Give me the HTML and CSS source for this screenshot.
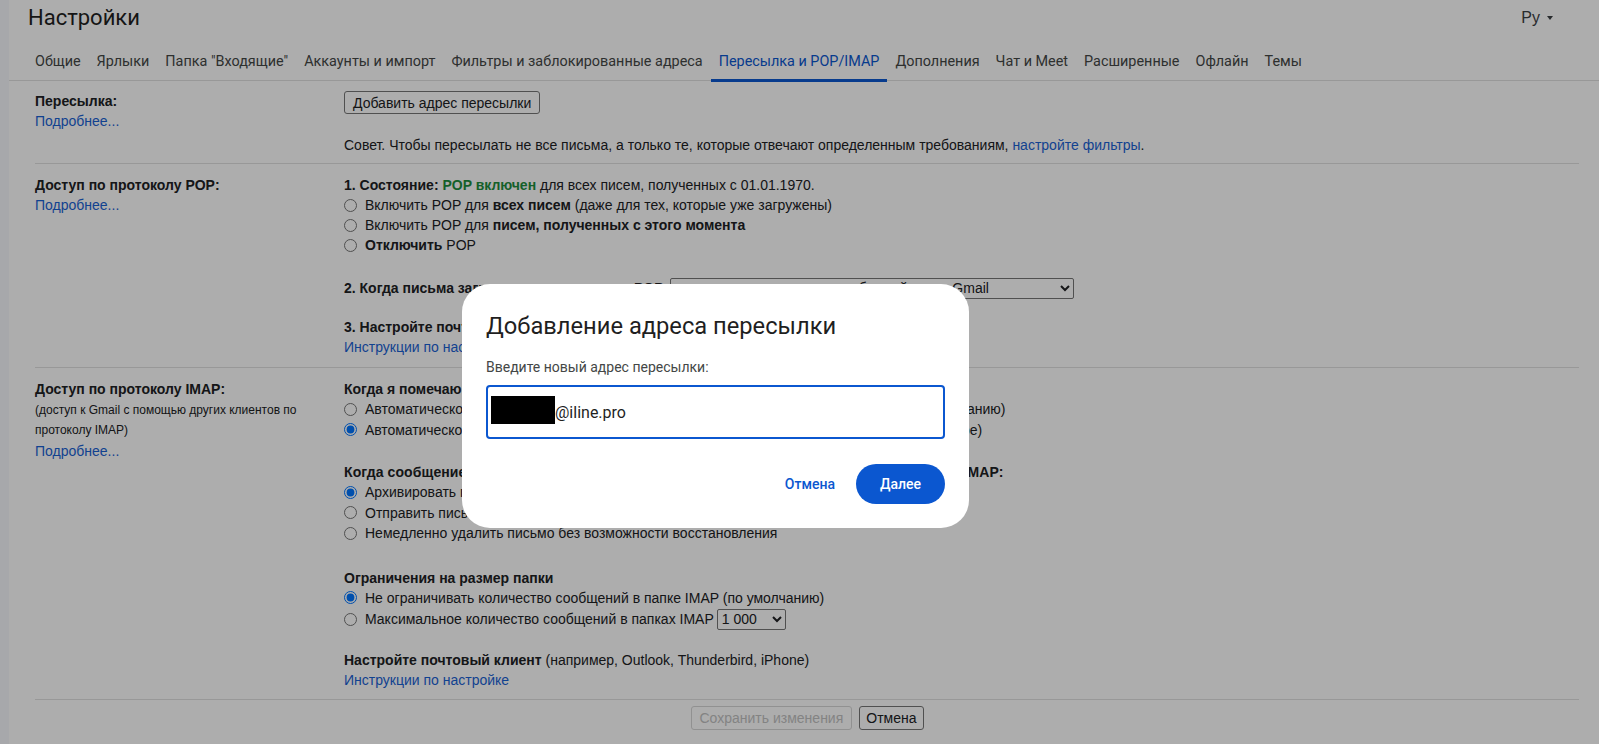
FILE: index.html
```html
<!DOCTYPE html>
<html lang="ru">
<head>
<meta charset="utf-8">
<title>Настройки</title>
<link rel="stylesheet" href="styles.css">
</head>
<body>
<div class="panel">
  <header class="topbar">
    <h1 class="title">Настройки</h1>
    <div class="lang">Ру<span class="caret"></span></div>
  </header>
  <nav class="tabs">
    <a class="tab">Общие</a>
    <a class="tab">Ярлыки</a>
    <a class="tab">Папка "Входящие"</a>
    <a class="tab">Аккаунты и импорт</a>
    <a class="tab">Фильтры и заблокированные адреса</a>
    <a class="tab active">Пересылка и POP/IMAP</a>
    <a class="tab">Дополнения</a>
    <a class="tab">Чат и Meet</a>
    <a class="tab">Расширенные</a>
    <a class="tab">Офлайн</a>
    <a class="tab">Темы</a>
  </nav>
  <main class="content">
    <section class="row row-first">
      <div class="label">
        <div class="label-title">Пересылка:</div>
        <a class="link">Подробнее...</a>
      </div>
      <div class="value">
        <div class="btn-line"><button class="btn">Добавить адрес пересылки</button></div>
        <p class="tip">Совет. Чтобы пересылать не все письма, а только те, которые отвечают определенным требованиям, <a class="link">настройте фильтры</a>.</p>
      </div>
    </section>

    <section class="row">
      <div class="label">
        <div class="label-title">Доступ по протоколу POP:</div>
        <a class="link">Подробнее...</a>
      </div>
      <div class="value">
        <div class="group">
          <div class="line"><b>1. Состояние: <span class="ok">POP включен</span></b> для всех писем, полученных с 01.01.1970.</div>
          <label class="opt"><input type="radio" name="pop"><span>Включить POP для <b>всех писем</b> (даже для тех, которые уже загружены)</span></label>
          <label class="opt"><input type="radio" name="pop"><span>Включить POP для <b>писем, полученных с этого момента</b></span></label>
          <label class="opt"><input type="radio" name="pop"><span><b>Отключить</b> POP</span></label>
        </div>
        <div class="group group-pop2">
          <div class="line sel-line"><b>2. Когда письма загружаются с помощью POP</b>
            <select class="sel sel-wide"><option>сохранять копию письма в обычной папке Gmail</option></select>
          </div>
        </div>
        <div class="group group-pop3">
          <div class="line"><b>3. Настройте почтовый клиент</b> (например, Outlook, Thunderbird, iPhone)</div>
          <div class="line"><a class="link">Инструкции по настройке</a></div>
        </div>
      </div>
    </section>

    <section class="row row-imap">
      <div class="label">
        <div class="label-title">Доступ по протоколу IMAP:</div>
        <div class="label-note">(доступ к Gmail с помощью других клиентов по протоколу IMAP)</div>
        <a class="link">Подробнее...</a>
      </div>
      <div class="value">
        <div class="group">
          <div class="line"><b>Когда я помечаю письмо в IMAP как удаленное:</b></div>
          <label class="opt"><input type="radio" name="exp"><span>Автоматическое удаление включено – немедленно обновлять данные на сервере (по умолчанию)</span></label>
          <label class="opt opt-tight"><input type="radio" name="exp" checked><span>Автоматическое удаление выключено (подождать, пока клиент не обновит данные на сервере)</span></label>
        </div>
        <div class="group">
          <div class="line line-wide"><b>Когда сообщение помечено как удаленное и перемещено из последней видимой папки IMAP:</b></div>
          <label class="opt"><input type="radio" name="del" checked><span>Архивировать письмо (по умолчанию)</span></label>
          <label class="opt"><input type="radio" name="del"><span>Отправить письмо в корзину</span></label>
          <label class="opt"><input type="radio" name="del"><span>Немедленно удалить письмо без возможности восстановления</span></label>
        </div>
        <div class="group group-size">
          <div class="line"><b>Ограничения на размер папки</b></div>
          <label class="opt"><input type="radio" name="lim" checked><span>Не ограничивать количество сообщений в папке IMAP (по умолчанию)</span></label>
          <label class="opt sel-line"><input type="radio" name="lim"><span>Максимальное количество сообщений в папках IMAP</span>
            <select class="sel sel-small"><option>1 000</option></select></label>
        </div>
        <div class="group group-client">
          <div class="line"><b>Настройте почтовый клиент</b> (например, Outlook, Thunderbird, iPhone)</div>
          <div class="line"><a class="link">Инструкции по настройке</a></div>
        </div>
      </div>
    </section>

    <div class="actions">
      <button class="btn btn-save" disabled>Сохранить изменения</button>
      <button class="btn btn-cancel">Отмена</button>
    </div>
  </main>
</div>

<div class="scrim"></div>

<div class="dialog" role="dialog">
  <h2 class="dlg-title">Добавление адреса пересылки</h2>
  <div class="dlg-label">Введите новый адрес пересылки:</div>
  <div class="dlg-input"><span class="redact"></span><span class="dlg-value">@iline.pro</span></div>
  <div class="dlg-actions">
    <button class="dlg-btn dlg-cancel">Отмена</button>
    <button class="dlg-btn dlg-next">Далее</button>
  </div>
</div>
</body>
</html>
```

FILE: styles.css
```css
* { box-sizing: border-box; }

html, body { margin: 0; padding: 0; }

body {
  background: #f6f8fc;
  font-family: "Liberation Sans", Arial, sans-serif;
  font-size: 14px;
  color: #202124;
  overflow: hidden;
}

.panel {
  margin-left: 9px;
  background: #ffffff;
  min-height: 744px;
}

.topbar {
  display: flex;
  justify-content: space-between;
  align-items: flex-start;
  height: 40px;
  padding: 0 46px 0 19px;
}

.title {
  margin: 0;
  font-family: Roboto, "Noto Sans", sans-serif;
  font-weight: 400;
  font-size: 22px;
  line-height: 36px;
  color: #1f1f1f;
}

.lang {
  display: flex;
  align-items: center;
  height: 36px;
  font-family: "Liberation Sans", Arial, sans-serif;
  font-size: 16px;
  color: #3c4043;
}

.caret {
  width: 0;
  height: 0;
  margin-left: 7px;
  border-left: 3.5px solid transparent;
  border-right: 3.5px solid transparent;
  border-top: 4px solid #3c4043;
}

.tabs {
  display: flex;
  height: 41px;
  padding-left: 18px;
  border-bottom: 1px solid #e0e0e0;
}

.tab {
  position: relative;
  padding: 3px 8px 0;
  line-height: 37px;
  font-family: Roboto, "Noto Sans", sans-serif;
  font-size: 14.4px;
  color: #444746;
  white-space: nowrap;
}

.tab.active { color: #0b57d0; }

.tab.active::after {
  content: "";
  position: absolute;
  left: 0;
  right: 0;
  bottom: -2px;
  height: 3px;
  background: #0b57d0;
}

.content {
  padding: 0 20px 0 26px;
}

.row {
  display: grid;
  grid-template-columns: 309px 1fr;
  padding: 11px 0 10px;
  border-bottom: 1px solid #e0e0e0;
  line-height: 20px;
}

.row-first { padding: 10px 0 8px; }
.row-imap { padding-bottom: 9px; }

.label-title { font-weight: 700; white-space: nowrap; }

.label-note {
  font-size: 12px;
  line-height: 20.5px;
  padding: 0.5px 20px 0.5px 0;
}

.link {
  color: #1a62d4;
  text-decoration: none;
}

.value { white-space: nowrap; }

.btn-line { height: 23px; }

.tip { margin: 21px 0 0; }

.group + .group { margin-top: 20px; }
.group.group-pop2 { margin-top: 22px; }
.group.group-pop3 { margin-top: 18px; }
.row-imap .group + .group { margin-top: 22px; }
.row-imap .group.group-size { margin-top: 24px; }
.row-imap .group.group-client { margin-top: 20px; }

.line { height: 20px; }
.line-wide { letter-spacing: 0.1px; }

.ok { color: #1e8e3e; }

.opt {
  display: flex;
  align-items: center;
  gap: 8px;
  height: 20px;
}

.opt-tight span { letter-spacing: -0.06px; }

.row-imap .opt { height: 20.5px; }

.opt input {
  margin: 0;
  width: 13px;
  height: 13px;
}

.sel-line {
  display: flex;
  align-items: center;
  height: 22px;
}

.row-imap .opt.sel-line { height: 22px; }

.sel {
  height: 21px;
  margin-left: 6px;
  font-family: "Liberation Sans", Arial, sans-serif;
  font-size: 14px;
  color: #202124;
  background: #ffffff;
  border: 1px solid #767676;
  border-radius: 2px;
}

.sel-wide { width: 404px; }
.sel-small { width: 69px; margin-left: -5px; }

.btn {
  height: 23px;
  padding: 0 8px;
  font-family: "Liberation Sans", Arial, sans-serif;
  font-size: 14px;
  color: #202124;
  background: #ffffff;
  border: 1px solid #767676;
  border-radius: 3px;
}

.btn:disabled {
  color: #c2c2c2;
  border-color: #d6d6d6;
}

.actions {
  display: flex;
  justify-content: center;
  gap: 7px;
  padding-top: 6px;
}

.actions .btn { height: 24px; }
.actions .btn-cancel { padding: 0 6px; }

.scrim {
  position: fixed;
  inset: 0;
  background: rgba(0, 0, 0, 0.32);
}

.dialog {
  position: fixed;
  left: 462px;
  top: 284px;
  width: 507px;
  padding: 26px 24px 24px;
  background: #ffffff;
  border-radius: 28px;
  font-family: Roboto, "Noto Sans", sans-serif;
}

.dlg-title {
  margin: 0;
  font-family: Roboto, "Noto Sans", sans-serif;
  font-weight: 400;
  font-size: 23.7px;
  line-height: 32px;
  color: #1f1f1f;
}

.dlg-label {
  margin-top: 15px;
  font-size: 14px;
  line-height: 20px;
  color: #444746;
}

.dlg-input {
  display: flex;
  align-items: center;
  height: 54px;
  margin-top: 8px;
  padding-left: 3px;
  border: 2px solid #0b57d0;
  border-radius: 4px;
}

.redact {
  display: inline-block;
  width: 64px;
  height: 28px;
  margin-top: -4px;
  background: #000000;
}

.dlg-value {
  font-size: 16px;
  color: #1f1f1f;
}

.dlg-actions {
  display: flex;
  justify-content: flex-end;
  gap: 8px;
  margin-top: 25px;
}

.dlg-btn {
  height: 40px;
  border: 0;
  border-radius: 20px;
  font-family: Roboto, "Noto Sans", sans-serif;
  font-size: 14px;
  font-weight: 500;
  background: transparent;
}

.dlg-cancel {
  padding: 0 13px;
  color: #0b57d0;
}

.dlg-next {
  padding: 0 24px;
  color: #ffffff;
  background: #0b57d0;
}
```
